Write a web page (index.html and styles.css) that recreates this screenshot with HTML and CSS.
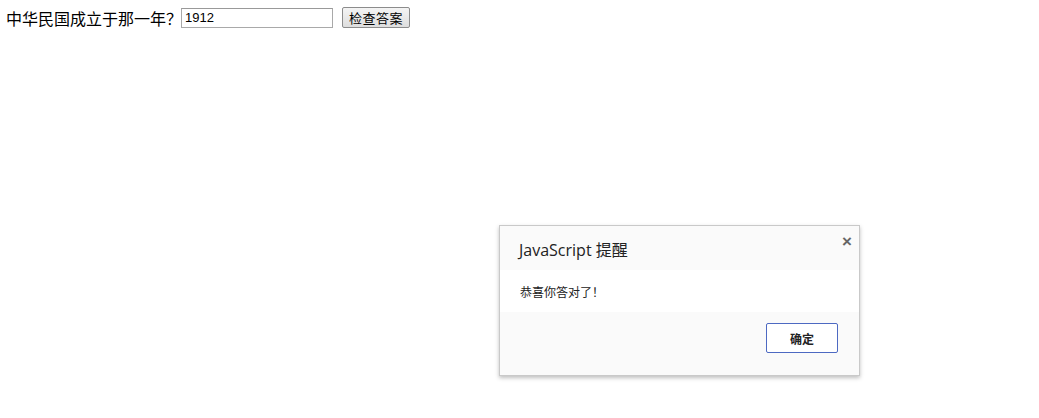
FILE: index.html
```html
<!DOCTYPE html>
<html lang="zh-CN">
<head>
<meta charset="utf-8">
<title>测验</title>
<link rel="stylesheet" href="styles.css">
</head>
<body>
<div class="quiz">
  <span class="question">中华民国成立于那一年？</span>
  <input class="answer" type="text" value="1912">
  <button class="check" type="button">检查答案</button>
</div>
<div class="dialog">
  <div class="dialog-head">
    <span class="dialog-title">JavaScript 提醒</span>
    <span class="dialog-close">×</span>
  </div>
  <div class="dialog-body">恭喜你答对了！</div>
  <div class="dialog-foot">
    <button class="ok" type="button">确定</button>
  </div>
</div>
</body>
</html>
```
FILE: styles.css
```css
html, body {
  margin: 0;
  background: #ffffff;
}
body {
  padding: 7px 6px;
  font-family: "Noto Sans CJK SC", "Liberation Sans", sans-serif;
  color: #000;
}
.quiz {
  display: flex;
  align-items: center;
  height: 21px;
}
.question {
  font-size: 16px;
  line-height: 20px;
}
.answer {
  box-sizing: border-box;
  width: 152px;
  height: 20px;
  margin: 0 0 0 -1px;
  padding: 0 3px;
  border: 1px solid #a9a9a9;
  border-top-color: #999;
  font-family: "Liberation Sans", Arial, sans-serif;
  font-size: 13px;
  color: #000;
  background: #fff;
}
.check {
  box-sizing: border-box;
  width: 68px;
  height: 21px;
  margin-left: 9px;
  padding: 0;
  border: 1px solid #8c8c8c;
  border-radius: 2px;
  background: linear-gradient(#f4f4f4, #dedede);
  font-family: "Noto Sans CJK SC", sans-serif;
  font-size: 13px;
  letter-spacing: 0.5px;
  line-height: 18px;
  color: #000;
}
.dialog {
  position: absolute;
  left: 499px;
  top: 225px;
  width: 361px;
  height: 151px;
  display: flex;
  flex-direction: column;
  background: #fafafa;
  border: 1px solid #c9c9c9;
  box-sizing: border-box;
  box-shadow: 0 2px 4px rgba(0, 0, 0, 0.25);
  font-family: "Noto Sans CJK SC", "Open Sans", sans-serif;
}
.dialog-head {
  position: relative;
  height: 44px;
  padding-left: 19px;
  display: flex;
  align-items: center;
  background: #fafafa;
}
.dialog-title {
  font-family: "Open Sans", "Noto Sans CJK SC", sans-serif;
  font-size: 16px;
  color: #222;
  padding-top: 1px;
}
.dialog-close {
  position: absolute;
  right: 7px;
  top: 6px;
  font-family: "Liberation Sans", sans-serif;
  font-size: 17px;
  font-weight: bold;
  color: #666;
}
.dialog-body {
  height: 42px;
  padding-left: 20px;
  display: flex;
  align-items: center;
  background: #ffffff;
  font-size: 12px;
  color: #222;
}
.dialog-foot {
  flex: 1;
  display: flex;
  justify-content: flex-end;
  align-items: flex-start;
  padding: 11px 21px 0 0;
  background: #fafafa;
}
.ok {
  box-sizing: border-box;
  width: 72px;
  height: 30px;
  padding: 0;
  border: 1px solid #4d69c2;
  border-radius: 2px;
  background: #ffffff;
  font-family: "Noto Sans CJK SC", sans-serif;
  font-size: 12px;
  font-weight: bold;
  color: #222;
}
```
